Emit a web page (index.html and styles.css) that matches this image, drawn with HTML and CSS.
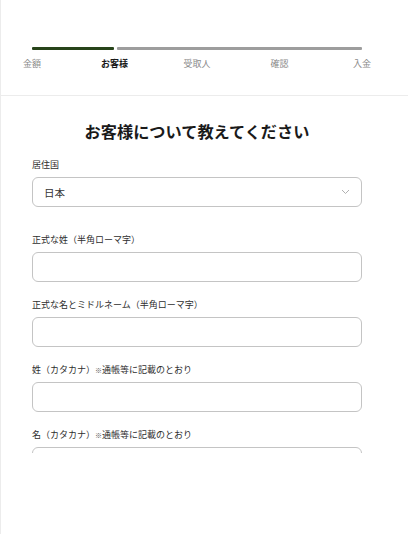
FILE: index.html
```html
<!DOCTYPE html>
<html lang="ja">
<head>
<meta charset="utf-8">
<link rel="stylesheet" href="styles.css">
</head>
<body>
<div class="page">
  <header class="header">
    <div class="progress">
      <div class="bar done"></div>
      <div class="bar todo"></div>
    </div>
    <div class="steps">
      <span class="step"><span>金額</span></span>
      <span class="step active"><span>お客様</span></span>
      <span class="step"><span>受取人</span></span>
      <span class="step"><span>確認</span></span>
      <span class="step"><span>入金</span></span>
    </div>
  </header>
  <main class="main">
    <h1 class="title">お客様について教えてください</h1>
    <div class="field first">
      <div class="label">居住国</div>
      <div class="control select">
        <span class="value">日本</span>
        <svg class="chev" width="9" height="6" viewBox="0 0 9 6"><path d="M1 1l3.5 3.5L8 1" fill="none" stroke="#b0b0b0" stroke-width="1"/></svg>
      </div>
    </div>
    <div class="field">
      <div class="label">正式な姓（半角ローマ字）</div>
      <div class="control"></div>
    </div>
    <div class="field">
      <div class="label">正式な名とミドルネーム（半角ローマ字）</div>
      <div class="control"></div>
    </div>
    <div class="field">
      <div class="label">姓（カタカナ）<span class="note">※</span>通帳等に記載のとおり</div>
      <div class="control"></div>
    </div>
    <div class="field">
      <div class="label">名（カタカナ）<span class="note">※</span>通帳等に記載のとおり</div>
      <div class="control"></div>
    </div>
  </main>
</div>
</body>
</html>
```

FILE: styles.css
```css
* { box-sizing: border-box; }
html, body { margin: 0; padding: 0; background: #fff; }
body {
  font-family: "Noto Sans CJK JP", "Noto Sans", sans-serif;
  color: #222;
}
.page {
  width: 408px;
  height: 534px;
  border-left: 1px solid #ececec;
}
.header {
  height: 96px;
  padding: 47px 46px 0 31px;
  border-bottom: 1px solid #ececec;
}
.progress {
  display: flex;
  gap: 3px;
  height: 3px;
}
.bar { height: 3px; border-radius: 1px; }
.bar.done { width: 82px; background: #27441a; }
.bar.todo { flex: 1; background: #9d9d9d; }
.steps {
  display: flex;
  justify-content: space-between;
  margin-top: 8px;
}
.step {
  width: 0;
  display: flex;
  justify-content: center;
  white-space: nowrap;
  font-size: 9px;
  line-height: 12px;
  color: #8a8a8a;
}
.step.active { color: #1a1a1a; font-weight: 700; }
.main {
  height: 357px;
  overflow: hidden;
  padding: 25px 46px 0 31px;
}
.title {
  margin: 0 0 18px;
  text-align: center;
  font-size: 16.2px;
  line-height: 20px;
  font-weight: 700;
  color: #1a1a1a;
}
.field { margin-bottom: 17px; }
.field.first { margin-bottom: 27px; }
.label {
  font-size: 9px;
  line-height: 12px;
  color: #2e2e2e;
  margin-bottom: 6px;
}
.note { font-size: 7px; color: #555; }
.control {
  height: 30px;
  border: 1px solid #c4c4c4;
  border-radius: 6px;
  background: #fff;
}
.select {
  display: flex;
  align-items: center;
  justify-content: space-between;
  padding: 0 11px 0 11px;
}
.value { font-size: 10.5px; color: #333; }
.chev { display: block; }
```
